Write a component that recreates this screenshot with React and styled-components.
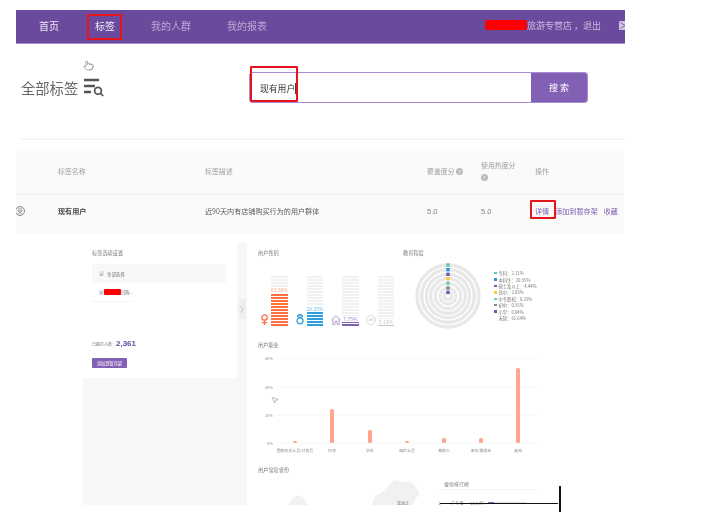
import React from 'react';
import styled, { createGlobalStyle } from 'styled-components';
import { MousePointer2, Pointer } from 'lucide-react';

const GlobalStyle = createGlobalStyle`
  html, body {
    margin: 0;
    padding: 0;
    background: #fff;
  }
  * {
    box-sizing: border-box;
  }
`;

const genders = [
  { id: 'female', value: '63.88%', height: 33, color: '#ff7043', text: '#ffa58c' },
  { id: 'male', value: '28.25%', height: 14, color: '#2d9fdc', text: '#6cbde8' },
  { id: 'home', value: '7.75%', height: 4, color: '#7a5fb3', text: '#9c88c6' },
  { id: 'unknown', value: '0.12%', height: 1, color: '#c4c4c4', text: '#c4c4c4' },
];

const education = [
  { name: '专科', value: '2.11%', color: '#4ecbbd', r: 31 },
  { name: '本科生', value: '20.55%', color: '#3b8fd9', r: 26.3 },
  { name: '硕士及以上', value: '4.44%', color: '#6a5ab0', r: 21.7 },
  { name: '高中', value: '2.03%', color: '#ffc640', r: 17.3 },
  { name: '中专职校', value: '0.25%', color: '#5fd0c5', r: 12.7 },
  { name: '初中', value: '0.55%', color: '#888888', r: 8 },
  { name: '小学', value: '0.04%', color: '#6a5ab5', r: 3.7 },
  { name: '未知', value: '61.64%', color: 'transparent' },
];

const jobs = [
  { name: '国家机关人员/公务员', x: 37, top: 89 },
  { name: '白领', x: 74, top: 57 },
  { name: '学生', x: 112, top: 78 },
  { name: '医护人员', x: 149, top: 89 },
  { name: '教职工', x: 186, top: 86 },
  { name: '退休/服务业', x: 223, top: 86 },
  { name: '未知', x: 260, top: 16 },
];

const axis = [
  { label: '60%', y: 6 },
  { label: '40%', y: 35 },
  { label: '20%', y: 63 },
  { label: '0%', y: 91 },
];

const GenderIcon = ({ id }) => {
  if (id === 'female') {
    return (
      <svg width="9" height="11" viewBox="0 0 9 11" fill="none" stroke="#ff7043" strokeWidth="1.3">
        <circle cx="4.5" cy="3.5" r="2.7" />
        <path d="M4.5 6.2V11M2 8.6h5" />
      </svg>
    );
  }
  if (id === 'male') {
    return (
      <svg width="8" height="11" viewBox="0 0 8 11" fill="none" stroke="#2d9fdc" strokeWidth="1.3">
        <circle cx="4" cy="6.8" r="3" />
        <path d="M2.4 1h3.2L6.4 2.4 4 3.8 1.6 2.4z" />
      </svg>
    );
  }
  if (id === 'home') {
    return (
      <svg width="10" height="10" viewBox="0 0 10 10" fill="none" stroke="#9c88c6" strokeWidth="0.8">
        <path d="M.5 5 5 .8 9.5 5M1.8 4v5.4h2.2V6.4h2v3h2.2V4" />
      </svg>
    );
  }
  return (
    <svg width="10" height="10" viewBox="0 0 10 10">
      <circle cx="5" cy="5" r="4.5" fill="none" stroke="#cfcfcf" strokeWidth="0.8" />
      <text x="5" y="6.1" textAnchor="middle" fontSize="3" fill="#b5b5b5" fontFamily="Liberation Sans, sans-serif">
        400
      </text>
    </svg>
  );
};

const App = () => {
  return (
    <Page>
      <GlobalStyle />
      <Main>
        <Nav>
          <NavItem $active>首页</NavItem>
          <NavItem $active>标签</NavItem>
          <NavItem>我的人群</NavItem>
          <NavItem>我的报表</NavItem>
          <NavUser>
            <Redaction />
            <UserName>旅游专营店 ，退出</UserName>
            <svg width="9" height="9" viewBox="0 0 9 9">
              <rect width="9" height="9" rx="1" fill="#cfc5df" />
              <path d="M1.5 1.5 6 4.5 1.5 7.5" fill="none" stroke="#6a4a9c" strokeWidth="0.8" />
            </svg>
          </NavUser>
        </Nav>

        <SearchRow>
          <PageTitle>
            <h1>全部标签</h1>
            <svg width="20" height="19" viewBox="0 0 20 19" fill="none" stroke="#555" strokeWidth="2.6">
              <path d="M0 2h15M0 8h11M0 14h7" />
              <circle cx="14" cy="12.8" r="3.4" strokeWidth="1.7" />
              <path d="m16.6 15.4 2.6 2.6" strokeWidth="1.7" />
            </svg>
          </PageTitle>
          <SearchBox>
            <SearchText>
              现有用户<Caret />
            </SearchText>
            <SearchButton>搜 索</SearchButton>
          </SearchBox>
        </SearchRow>

        <Divider />

        <Table>
          <HeadRow>
            <span />
            <HeadCell>标签名称</HeadCell>
            <HeadCell>标签描述</HeadCell>
            <HeadCell>
              覆盖度分 <Help>?</Help>
            </HeadCell>
            <HeadCell>
              使用热度分
              <br />
              <Help>?</Help>
            </HeadCell>
            <HeadCell>操作</HeadCell>
          </HeadRow>
          <BodyRow>
            <TagMark>受</TagMark>
            <TagName>现有用户</TagName>
            <BodyCell>近90天内有店铺购买行为的用户群体</BodyCell>
            <Score>5.0</Score>
            <Score>5.0</Score>
            <Actions>
              <span>详情</span>
              <span>添加到暂存架</span>
              <span>收藏</span>
            </Actions>
          </BodyRow>
        </Table>

        <Panel>
          <LeftColumn>
            <OptionCard>
              <SectionTitle>标签选项设置</SectionTitle>
              <OptionRow $shaded>
                <CheckBox>✓</CheckBox>
                全部选择
              </OptionRow>
              <OptionRow $underlined>
                <CheckBox>✓</CheckBox>
                <SmallRedaction />
                回购...
              </OptionRow>
              <Count>
                已圈定人数：<strong>2,361</strong>
              </Count>
              <AddButton>添加到暂存架</AddButton>
            </OptionCard>
          </LeftColumn>
          <Strip>
            <Handle>
              <svg width="4" height="7" viewBox="0 0 4 7" fill="none" stroke="#b5b5b5" strokeWidth="0.8">
                <path d="m.7.7 2.6 2.8L.7 6.3" />
              </svg>
            </Handle>
          </Strip>
          <RightColumn>
            <TopCharts>
              <GenderSection>
                <SectionTitle>用户性别</SectionTitle>
                <GenderRow>
                  {genders.map((item) => (
                    <GenderColumn key={item.id}>
                      <IconSlot>
                        <GenderIcon id={item.id} />
                      </IconSlot>
                      <Track>
                        <TrackLabel $color={item.text}>{item.value}</TrackLabel>
                        <TrackFill $color={item.color} style={{ height: item.height }} />
                      </Track>
                    </GenderColumn>
                  ))}
                </GenderRow>
              </GenderSection>
              <EducationSection>
                <SectionTitle>教育程度</SectionTitle>
                <EducationBody>
                  <svg width="68" height="68" viewBox="-34 -34 68 68">
                    {education
                      .filter((item) => item.r)
                      .map((item) => (
                        <g key={item.name}>
                          <circle r={item.r} fill="none" stroke="#e8e8e8" strokeWidth="3.3" />
                          <rect x="-1.7" y={-item.r - 1.7} width="3.4" height="3.4" fill={item.color} />
                        </g>
                      ))}
                  </svg>
                  <Legend>
                    {education.map((item) => (
                      <LegendRow key={item.name}>
                        <LegendDot $color={item.color} />
                        {item.name}：{item.value}
                      </LegendRow>
                    ))}
                  </Legend>
                </EducationBody>
              </EducationSection>
            </TopCharts>

            <SectionTitle>用户职业</SectionTitle>
            <JobChart width="290" height="102" viewBox="0 0 290 102">
              {axis.map((tick) => (
                <g key={tick.label}>
                  <line x1="18" x2="279" y1={tick.y} y2={tick.y} stroke="#f5f5f5" strokeWidth="0.8" />
                  <text x="15" y={tick.y + 1.5} textAnchor="end" fontSize="4" fill="#999">
                    {tick.label}
                  </text>
                </g>
              ))}
              {jobs.map((job) => (
                <g key={job.name}>
                  <rect x={job.x - 2} y={job.top} width="4" height={91 - job.top} rx="1.5" fill="#ffa48f" />
                  <text x={job.x} y="99.5" textAnchor="middle" fontSize="3.9" fill="#888">
                    {job.name}
                  </text>
                </g>
              ))}
            </JobChart>

            <ProvinceTitle>用户常驻省份</ProvinceTitle>
            <ProvinceRow>
              <svg width="180" height="31" viewBox="0 0 180 31">
                <path d="M30 31 34 25 40 21 45 23 50 31Z" fill="#f1f1f1" />
                <path d="M114 31 117 22 124 19 130 12 136 6 145 8 152 7 157 12 162 20 158 24 154 31Z" fill="#f1f1f1" />
                <text x="139" y="30.5" fontSize="4" fill="#777">
                  黑龙江
                </text>
              </svg>
              <Ranking>
                <RankingTitle>省份排行榜</RankingTitle>
                <RankRow>
                  <RankNo>1.</RankNo>
                  <RankName>广东省</RankName>
                  <RankValue>14.55%</RankValue>
                  <RankBar>
                    <RankFill style={{ width: 6 }} />
                  </RankBar>
                </RankRow>
              </Ranking>
            </ProvinceRow>
          </RightColumn>
        </Panel>
      </Main>

      <RedBox $x={87} $y={14} $w={35} $h={26} />
      <RedBox $x={250} $y={66} $w={48} $h={36} />
      <RedBox $x={530} $y={200} $w={26} $h={19} />
      <Cursor $x={83} $y={60}>
        <Pointer size={11} color="#777" strokeWidth={1.3} />
      </Cursor>
      <Cursor $x={271} $y={396}>
        <MousePointer2 size={8} color="#666" strokeWidth={1.3} />
      </Cursor>
      <BlackLine $x={440} $y={503} $w={118} $h={1} />
      <BlackLine $x={559} $y={486} $w={2} $h={26} />
    </Page>
  );
};

export default App;

const Page = styled.div`
  position: relative;
  width: 707px;
  height: 514px;
  padding: 10px 0 0 16px;
  overflow: hidden;
  background: #fff;
  font-family: 'Noto Sans CJK SC', 'Liberation Sans', sans-serif;
`;
const Main = styled.div`
  width: 609px;
  filter: blur(0.4px);
`;
const Nav = styled.nav`
  display: flex;
  align-items: center;
  gap: 36px;
  height: 34px;
  padding: 0 0 2px 23px;
  overflow: hidden;
  background: #6a4a9c;
  border-bottom: 1px solid #a88fcf;
`;
const NavItem = styled.span`
  font-size: 10px;
  color: ${(p) => (p.$active ? '#f0ebf7' : '#bcaad8')};
`;
const NavUser = styled.div`
  display: flex;
  align-items: center;
  flex-shrink: 0;
  margin-left: auto;
  margin-right: -3px;
`;
const Redaction = styled.span`
  width: 42px;
  height: 10px;
  margin-bottom: 2px;
  border-radius: 2px;
  background: #f00;
`;
const UserName = styled.span`
  width: 92px;
  font-size: 9px;
  color: #c9bbe0;
`;
const SearchRow = styled.div`
  display: flex;
  align-items: center;
  margin-top: 28px;
`;
const PageTitle = styled.div`
  display: flex;
  align-items: center;
  gap: 6px;
  width: 233px;
  padding-left: 5px;
  h1 {
    margin: 0;
    font-size: 14.3px;
    font-weight: 400;
    color: #666;
  }
`;
const SearchBox = styled.div`
  display: flex;
  width: 339px;
  height: 31px;
  border: 1px solid #a98bd4;
  border-radius: 3px;
  overflow: hidden;
`;
const SearchText = styled.div`
  display: flex;
  align-items: center;
  flex: 1;
  padding: 2px 0 0 10px;
  font-size: 8.8px;
  color: #333;
`;
const Caret = styled.i`
  width: 1px;
  height: 11px;
  background: #444;
`;
const SearchButton = styled.div`
  display: flex;
  align-items: center;
  justify-content: center;
  width: 56px;
  font-size: 9px;
  color: #fff;
  background: #8261b5;
`;
const Divider = styled.div`
  height: 2px;
  margin: 35px 0 0 5px;
  background: #f6f6f6;
`;
const Table = styled.div`
  width: 608px;
  margin-top: 9px;
  overflow: hidden;
  background: #fafafa;
`;
const HeadRow = styled.div`
  display: grid;
  grid-template-columns: 42px 147px 222px 54px 54px 1fr;
  align-items: center;
  height: 46px;
  padding-bottom: 2px;
  border-bottom: 1px solid #eee;
`;
const HeadCell = styled.div`
  font-size: 6.9px;
  line-height: 12px;
  color: #a0a0a0;
`;
const Help = styled.span`
  display: inline-flex;
  align-items: center;
  justify-content: center;
  width: 7px;
  height: 7px;
  border-radius: 50%;
  font-size: 5px;
  color: #fff;
  background: #bbb;
`;
const BodyRow = styled.div`
  display: grid;
  grid-template-columns: 42px 147px 222px 54px 54px 1fr;
  align-items: center;
  height: 39px;
  padding-bottom: 7px;
  font-size: 7.1px;
`;
const TagMark = styled.span`
  display: flex;
  align-items: center;
  justify-content: center;
  width: 10px;
  height: 10px;
  margin-left: -1px;
  border: 1px solid #888;
  border-radius: 50%;
  font-size: 5.5px;
  color: #777;
`;
const TagName = styled.span`
  font-weight: 700;
  color: #444;
`;
const BodyCell = styled.span`
  color: #5c5c5c;
`;
const Score = styled.span`
  font-family: 'Liberation Sans', sans-serif;
  font-size: 7.5px;
  color: #808080;
`;
const Actions = styled.div`
  display: flex;
  gap: 6px;
  white-space: nowrap;
  color: #7a5cae;
`;
const Panel = styled.section`
  display: flex;
  width: 466px;
  height: 262px;
  margin: 9px 0 0 67px;
  overflow: hidden;
  background: #f7f7f7;
  filter: blur(0.25px);
`;
const LeftColumn = styled.div`
  width: 154px;
  flex-shrink: 0;
`;
const OptionCard = styled.div`
  height: 135px;
  padding: 6px 10px 0 9px;
  background: #fff;
`;
const SectionTitle = styled.div`
  height: 8px;
  font-size: 5.2px;
  line-height: 8px;
  color: #777;
`;
const OptionRow = styled.div`
  display: flex;
  align-items: center;
  gap: 3px;
  width: ${(p) => (p.$underlined ? '41px' : '134px')};
  height: 19px;
  padding-left: 7px;
  margin-top: ${(p) => (p.$shaded ? '7px' : '0')};
  font-size: 4.4px;
  white-space: nowrap;
  color: #777;
  background: ${(p) => (p.$shaded ? '#f8f8f8' : 'transparent')};
  border-bottom: ${(p) => (p.$underlined ? '1px solid #f3f3f3' : 'none')};
`;
const CheckBox = styled.span`
  display: flex;
  align-items: center;
  justify-content: center;
  width: 5px;
  height: 5px;
  font-size: 4px;
  line-height: 1;
  color: #555;
  background: #e6e2ef;
`;
const SmallRedaction = styled.span`
  flex-shrink: 0;
  width: 17px;
  height: 6px;
  margin: 0 -3px 0 -3px;
  border-radius: 1px;
  background: #f00;
`;
const Count = styled.div`
  margin-top: 36px;
  font-size: 4px;
  line-height: 11px;
  color: #777;
  strong {
    font-family: 'Liberation Sans', sans-serif;
    font-size: 8px;
    color: #6a4a9c;
  }
`;
const AddButton = styled.div`
  display: flex;
  align-items: center;
  justify-content: center;
  width: 35px;
  height: 10px;
  margin-top: 8px;
  border-radius: 1px;
  font-size: 4.2px;
  color: #fff;
  background: #8261b5;
`;
const Strip = styled.div`
  display: flex;
  justify-content: center;
  width: 10px;
  flex-shrink: 0;
  padding-top: 56px;
`;
const Handle = styled.div`
  display: flex;
  align-items: center;
  justify-content: center;
  width: 7px;
  height: 20px;
  border-radius: 1px;
  background: #eee;
`;
const RightColumn = styled.div`
  flex: 1;
  padding: 6px 0 0 11px;
  background: #fff;
`;
const TopCharts = styled.div`
  display: flex;
  height: 92px;
`;
const GenderSection = styled.div`
  width: 145px;
`;
const GenderRow = styled.div`
  display: flex;
  margin-top: 18px;
`;
const GenderColumn = styled.div`
  display: flex;
  align-items: flex-end;
  width: 35.6px;
`;
const IconSlot = styled.div`
  display: flex;
  justify-content: center;
  width: 13px;
  margin-bottom: 1px;
`;
const Track = styled.div`
  display: flex;
  flex-direction: column;
  justify-content: flex-end;
  width: 16.5px;
  height: 51px;
  background: repeating-linear-gradient(to top, #f1f1f1 0 2px, #fff 2px 3px);
`;
const TrackLabel = styled.div`
  font-size: 5px;
  line-height: 6px;
  text-align: center;
  white-space: nowrap;
  background: #fff;
  color: ${(p) => p.$color};
`;
const TrackFill = styled.div`
  background: repeating-linear-gradient(to top, ${(p) => p.$color} 0 2px, #fff 2px 3px);
`;
const EducationSection = styled.div`
  flex: 1;
`;
const EducationBody = styled.div`
  display: flex;
  margin: 5px 0 0 11px;
`;
const Legend = styled.div`
  margin-left: 12px;
  padding-top: 8px;
`;
const LegendRow = styled.div`
  display: flex;
  align-items: center;
  gap: 2px;
  height: 6.4px;
  font-size: 4.3px;
  white-space: nowrap;
  color: #777;
`;
const LegendDot = styled.i`
  width: 2.5px;
  height: 2.5px;
  background: ${(p) => p.$color};
`;
const JobChart = styled.svg`
  display: block;
  margin-top: 3px;
  font-family: 'Noto Sans CJK SC', sans-serif;
`;
const ProvinceTitle = styled(SectionTitle)`
  margin-top: 12px;
`;
const ProvinceRow = styled.div`
  display: flex;
`;
const Ranking = styled.div`
  width: 102px;
  padding-top: 6px;
`;
const RankingTitle = styled.div`
  height: 10px;
  padding-left: 6px;
  font-size: 5px;
  line-height: 8px;
  color: #777;
  border-bottom: 1px solid #f5f5f5;
`;
const RankRow = styled.div`
  display: flex;
  align-items: center;
  height: 8px;
  margin-top: 9px;
  font-size: 4.2px;
  color: #777;
`;
const RankNo = styled.span`
  width: 13px;
`;
const RankName = styled.span`
  width: 19px;
`;
const RankValue = styled.span`
  width: 18px;
`;
const RankBar = styled.div`
  width: 38px;
  height: 2px;
  background: #ddd;
`;
const RankFill = styled.div`
  height: 2px;
  background: #8b5cc4;
`;
const RedBox = styled.div`
  position: absolute;
  left: ${(p) => p.$x}px;
  top: ${(p) => p.$y}px;
  width: ${(p) => p.$w}px;
  height: ${(p) => p.$h}px;
  border: 2px solid #e8141c;
  border-radius: 1px;
`;
const Cursor = styled.div`
  position: absolute;
  left: ${(p) => p.$x}px;
  top: ${(p) => p.$y}px;
  display: flex;
`;
const BlackLine = styled.div`
  position: absolute;
  left: ${(p) => p.$x}px;
  top: ${(p) => p.$y}px;
  width: ${(p) => p.$w}px;
  height: ${(p) => p.$h}px;
  background: #111;
`;
